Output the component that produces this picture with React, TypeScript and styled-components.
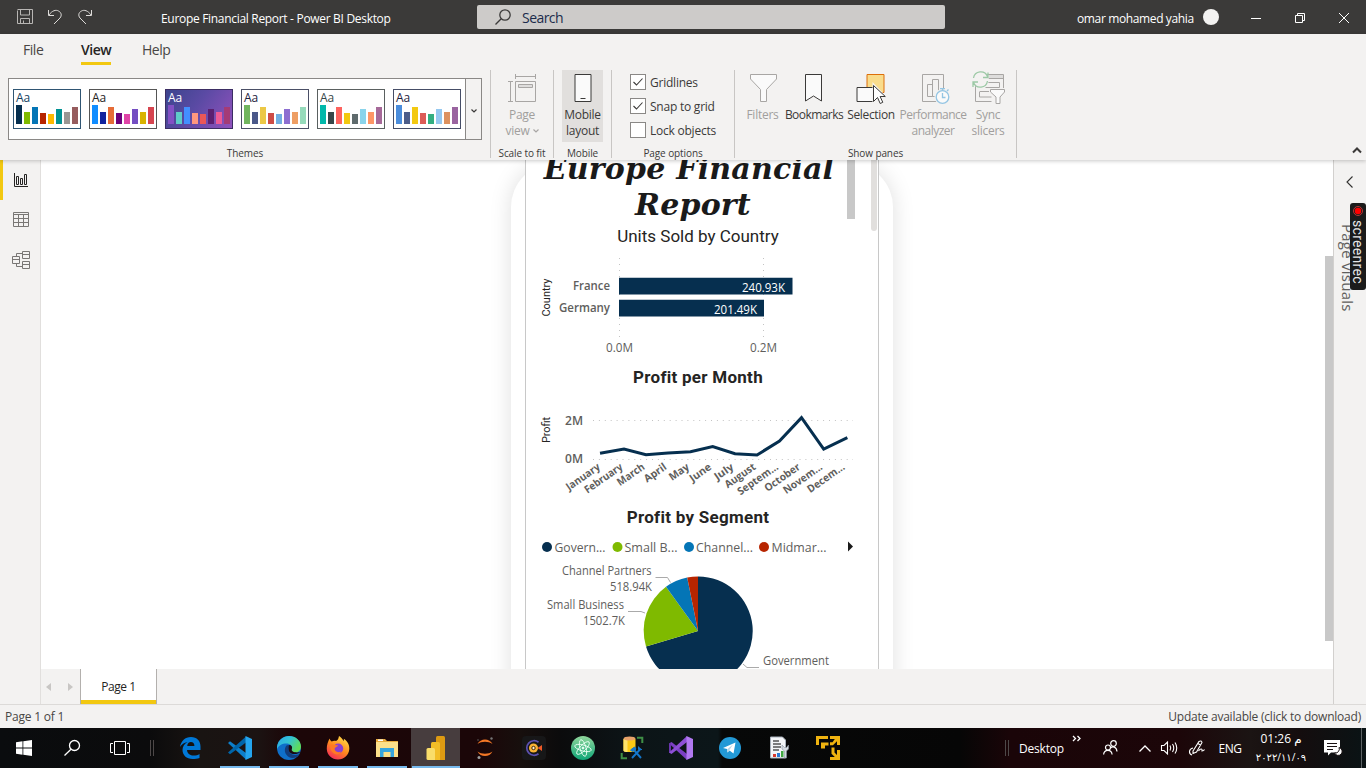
import React from "react";
import styled, { createGlobalStyle } from "styled-components";

const ui = `"Open Sans", "Noto Sans", "DejaVu Sans", sans-serif`;

const Global = createGlobalStyle`
  * { box-sizing: border-box; }
  body { margin: 0; overflow: hidden; font-family: ${ui}; font-size: 12px; color: #252423; }
  svg { display: block; flex: none; overflow: visible; }
`;

const Window = styled.div`
  display: flex;
  flex-direction: column;
  width: 1366px;
  height: 768px;
  background: #fff;
  overflow: hidden;
`;

/* Title bar */
const TitleBar = styled.header`
  display: grid;
  grid-template-columns: 477px 468px 1fr;
  align-items: center;
  height: 34px;
  flex: none;
  background: #3b3a39;
  color: #fff;
`;
const QuickAccess = styled.div`
  display: flex;
  align-items: center;
  padding-left: 17px;
  gap: 14px;
`;
const DocTitle = styled.span<{ $gap?: number }>`
  font-size: 12px;
  letter-spacing: ${(p) => (p.$gap ? -0.31 : -0.37)}px;
  white-space: nowrap;
  margin-left: ${(p) => p.$gap ?? 0}px;
  padding-top: 2px;
`;
const SearchBox = styled.div`
  display: flex;
  align-items: center;
  gap: 11px;
  height: 24px;
  padding-left: 18px;
  border-radius: 2px;
  background: #cdcbc9;
  color: #1b2b4b;
  font-size: 14px;
  letter-spacing: -0.55px;
`;
const Account = styled.div`
  display: flex;
  align-items: center;
  padding-left: 132px;
`;
const Avatar = styled.div`
  width: 16px;
  height: 16px;
  margin: 0 32px 0 9px;
  border-radius: 50%;
  background: #f3f2f1;
`;
const WindowButtons = styled.div`
  display: flex;
  align-items: center;
  gap: 34px;
  padding-top: 1px;
`;

/* Ribbon */
const Ribbon = styled.section`
  position: relative;
  z-index: 2;
  height: 126px;
  flex: none;
  background: #f3f2f1;
  box-shadow: 0 1px 4px rgba(0, 0, 0, 0.22);
`;
const Tabs = styled.nav`
  display: flex;
  height: 36px;
  padding-left: 23px;
`;
const Tab = styled.span<{ $w: number; $gap: number; $active?: boolean }>`
  width: ${(p) => p.$w}px;
  margin-right: ${(p) => p.$gap}px;
  height: 31px;
  font-size: 14px;
  line-height: 32px;
  letter-spacing: -0.45px;
  white-space: nowrap;
  color: ${(p) => (p.$active ? "#252423" : "#484644")};
  font-weight: ${(p) => (p.$active ? 600 : 400)};
  border-bottom: 3px solid ${(p) => (p.$active ? "#f2c811" : "transparent")};
`;
const Groups = styled.div`
  display: flex;
  height: 88px;
  position: relative;
`;
const Group = styled.div<{ $w: number }>`
  display: flex;
  flex-direction: column;
  width: ${(p) => p.$w}px;
  height: 88px;
  border-right: 1px solid #c8c6c4;
`;
const GroupBody = styled.div<{ $left?: number }>`
  display: flex;
  flex: none;
  height: 76px;
  padding-left: ${(p) => p.$left ?? 0}px;
`;
const GroupLabel = styled.div`
  text-align: center;
  font-size: 10px;
  line-height: 14px;
  letter-spacing: -0.1px;
  color: #3b3a39;
`;
const Gallery = styled.div`
  display: flex;
  align-items: center;
  width: 474px;
  height: 62px;
  margin-top: 8px;
  border: 1px solid #8a8886;
  background: #fff;
`;
const GalleryItems = styled.div`
  display: flex;
  gap: 8px;
  width: 456px;
  padding-left: 4px;
`;
const GalleryMore = styled.div`
  display: flex;
  align-items: center;
  justify-content: center;
  width: 16px;
  height: 60px;
  flex: none;
  background: #f3f2f1;
  border-left: 1px solid #8a8886;
  padding-top: 4px;
`;
const ThemeCard = styled.div<{ $edge: string; $ink: string; $fill: string }>`
  display: flex;
  flex-direction: column;
  justify-content: space-between;
  width: 68px;
  height: 40px;
  padding: 0 2px 4px;
  border: 1px solid ${(p) => p.$edge};
  background: ${(p) => p.$fill};
  color: ${(p) => p.$ink};
  font-size: 12px;
  line-height: 15px;
  letter-spacing: -0.1px;
`;
const ThemeBars = styled.div`
  display: flex;
  align-items: flex-end;
  gap: 2px;
  height: 19px;
  margin-top: -1px;
`;
const ThemeBar = styled.i<{ $h: number; $c: string }>`
  width: 6px;
  height: ${(p) => p.$h}px;
  background: ${(p) => p.$c};
`;
const RibbonButton = styled.div<{ $w: number; $on?: boolean; $off?: boolean; $ls?: number }>`
  display: flex;
  flex-direction: column;
  align-items: center;
  width: ${(p) => p.$w}px;
  height: 72px;
  padding-top: 2px;
  text-align: center;
  white-space: pre;
  line-height: 16px;
  font-size: 12px;
  letter-spacing: ${(p) => p.$ls ?? -0.25}px;
  background: ${(p) => (p.$on ? "#e1dfdd" : "transparent")};
  color: ${(p) => (p.$off ? "#a19f9d" : "#3b3a39")};
`;
const ButtonText = styled.span`
  margin-top: 3px;
`;
const Caret = styled.svg`
  display: inline-block;
  margin-left: 3px;
  vertical-align: 2px;
`;
const Options = styled.div`
  display: flex;
  flex-direction: column;
  gap: 8px;
  padding-top: 4px;
`;
const Option = styled.label`
  display: flex;
  align-items: center;
  gap: 4px;
  height: 16px;
  font-size: 12px;
  letter-spacing: -0.23px;
  color: #3b3a39;
`;
const CheckBox = styled.span`
  display: flex;
  align-items: center;
  justify-content: center;
  width: 16px;
  height: 16px;
  border: 1px solid #8a8886;
  background: #fff;
`;
const Collapse = styled.div`
  margin: 77px 4px 0 auto;
`;

/* Work area */
const Work = styled.main`
  display: flex;
  height: 544px;
  flex: none;
`;
const Rail = styled.aside`
  width: 41px;
  background: #f3f2f1;
  border-right: 1px solid #e1dfdd;
`;
const RailItem = styled.div<{ $active?: boolean }>`
  display: flex;
  align-items: center;
  height: 40px;
  padding-left: ${(p) => (p.$active ? 8 : 11)}px;
  border-left: ${(p) => (p.$active ? "3px solid #f2c811" : "0")};
`;
const Center = styled.div`
  display: flex;
  flex-direction: column;
  width: 1292px;
`;
const Canvas = styled.div`
  position: relative;
  display: flex;
  height: 509px;
  padding-left: 470px;
  overflow: hidden;
  background: #fff;
`;
const Phone = styled.div`
  width: 382px;
  height: 700px;
  margin-top: 3px;
  padding: 0 14px;
  border-radius: 44px;
  background: #fff;
  box-shadow: 0 0 22px rgba(0, 0, 0, 0.13);
`;
const Screen = styled.div`
  position: relative;
  display: flow-root;
  width: 354px;
  height: 600px;
  margin-top: -3px;
  padding: 0 23px 0 15px;
  background: #fff;
  border: 1px solid #c8c8c8;
  border-top: 0;
`;
const Scroll = styled.div<{ $x: number; $y: number; $w: number; $h: number; $c: string; $r?: number }>`
  position: absolute;
  left: ${(p) => p.$x}px;
  top: ${(p) => p.$y}px;
  width: ${(p) => p.$w}px;
  height: ${(p) => p.$h}px;
  border-radius: ${(p) => p.$r ?? 0}px;
  background: ${(p) => p.$c};
`;
const ReportTitle = styled.h1`
  width: 330px;
  height: 73px;
  margin: -9px 0 0 -17px;
  text-align: center;
  font: italic bold 30px/36px "DejaVu Serif", "Liberation Serif", serif;
  letter-spacing: 0.2px;
  white-space: nowrap;
  color: #1a1a1a;
`;
const TitleLine = styled.span<{ $indent?: number }>`
  display: block;
  padding-left: ${(p) => p.$indent ?? 0}px;
`;
const VisualTitle = styled.h2<{ $bold?: boolean }>`
  height: 24px;
  margin: 0;
  text-align: center;
  font: ${(p) => (p.$bold ? 700 : 400)} 17px/24px Roboto, sans-serif;
  letter-spacing: ${(p) => (p.$bold ? 0.27 : 0)}px;
  color: #252423;
`;
const Chart = styled.svg`
  font-family: ${ui};
  font-size: 12px;
  fill: #605e5c;
`;

const Sheets = styled.div`
  display: flex;
  height: 35px;
  background: #f3f2f1;
`;
const SheetArrows = styled.div`
  display: flex;
  align-items: center;
  gap: 17px;
  width: 39px;
  padding-left: 5px;
`;
const Sheet = styled.div`
  width: 77px;
  height: 35px;
  text-align: center;
  font-size: 12px;
  line-height: 36px;
  font-weight: 500;
  letter-spacing: -0.45px;
  background: #fff;
  border: solid #b3b0ad;
  border-width: 0 1px;
  box-shadow: inset 0 -4px #f2c811;
`;
const VisualsPane = styled.aside`
  position: relative;
  width: 33px;
  background: #f3f2f1;
  border-left: 1px solid #d2d0ce;
  padding: 16px 0 0 12px;
`;
const PaneTitle = styled.div`
  margin-top: 36px;
  margin-left: -7px;
  writing-mode: vertical-rl;
  font-size: 15px;
  line-height: 18px;
  letter-spacing: 0.25px;
  white-space: nowrap;
  color: #605e5c;
`;
const RecorderBadge = styled.div`
  position: absolute;
  left: 16px;
  top: 43px;
  display: flex;
  flex-direction: column;
  align-items: center;
  gap: 4px;
  width: 16px;
  height: 87px;
  padding-top: 3px;
  border-radius: 3px;
  background: #1b1b1b;
  color: #e6e6e6;
`;
const RecorderName = styled.span`
  writing-mode: vertical-rl;
  font: 400 14px/16px Roboto, sans-serif;
  letter-spacing: 0.3px;
`;
const StatusBar = styled.footer`
  display: flex;
  justify-content: space-between;
  align-items: center;
  height: 24px;
  flex: none;
  padding: 0 5px;
  border-top: 1px solid #dcdad8;
  background: #f3f2f1;
  color: #484644;
  font-size: 12px;
  letter-spacing: -0.22px;
`;

/* Taskbar */
const Taskbar = styled.div`
  display: flex;
  align-items: center;
  height: 40px;
  flex: none;
  color: #fff;
  background: linear-gradient(90deg, #0a0c0e 0, #0b0b0c 150px, #191412 200px, #1b1312 258px, #1c0608 290px, #1b0608 480px, #170f0d 520px, #0b0b0c 560px, #0c1417 630px, #0c1619 718px, #070808 722px, #060606 960px, #1a0508 1010px, #1c0609 1180px, #1b1413 1250px, #140d0e 1300px, #0a1315 1366px);
`;
const SystemButton = styled.div<{ $ml: number }>`
  display: flex;
  margin-left: ${(p) => p.$ml}px;
`;
const Apps = styled.div`
  display: flex;
  margin-left: 12px;
`;
const TaskApp = styled.div<{ $open?: boolean; $active?: boolean }>`
  display: flex;
  align-items: center;
  justify-content: center;
  width: 49px;
  height: 40px;
  background: ${(p) =>
    p.$open
      ? "linear-gradient(#76b9ed, #76b9ed) 50% 100% / " + (p.$active ? "48px" : "40px") + " 2px no-repeat" + (p.$active ? ", #473d3e" : "")
      : "none"};
`;
const Tray = styled.div`
  display: flex;
  align-items: center;
  margin-left: 151px;
`;
const TrayCell = styled.div<{ $w: number; $ls?: number; $up?: number }>`
  display: flex;
  align-items: center;
  justify-content: center;
  width: ${(p) => p.$w}px;
  padding-bottom: ${(p) => p.$up ?? 0}px;
  font-size: 12px;
  letter-spacing: ${(p) => p.$ls ?? 0}px;
  white-space: nowrap;
  flex: none;
`;
const Clock = styled.div`
  display: flex;
  flex-direction: column;
  align-items: center;
  width: 58px;
  padding-bottom: 1px;
  white-space: nowrap;
  font-size: 12px;
  line-height: 18px;
  letter-spacing: -0.55px;
`;
const ClockDate = styled.span`
  font-size: 10px;
  letter-spacing: -0.1px;
`;

const themes = [
  { edge: "#2f5573", ink: "#123f5f", fill: "#fff", bars: ["#062f4f", "#7fba00", "#0475b6", "#b72500", "#fdb900", "#009294", "#999694", "#965c5e"] },
  { edge: "#555", ink: "#252423", fill: "#fff", bars: ["#118dff", "#12239e", "#e66c37", "#6b007b", "#e044a7", "#744ec2", "#d9b300", "#d64550"] },
  { edge: "#3b2d63", ink: "#fff", fill: "linear-gradient(125deg, #3f4590 5%, #5b4aa4 45%, #9152bd)", bars: ["#8250c4", "#5ecbc8", "#438fff", "#ff977e", "#eb5757", "#5b2071", "#ec5a96", "#a43b76"] },
  { edge: "#4a4f66", ink: "#1c2340", fill: "#fff", bars: ["#70b55e", "#4a588a", "#ecc846", "#cd4c46", "#71afe2", "#8d6fd1", "#ee9e64", "#95dabb"] },
  { edge: "#5a6060", ink: "#374649", fill: "#fff", bars: ["#01b8aa", "#374649", "#fd625e", "#f2c80f", "#5f6b6d", "#8ad4eb", "#fe9666", "#a66999"] },
  { edge: "#454d66", ink: "#1c2340", fill: "#fff", bars: ["#4a8ddc", "#4c5d8a", "#f3c911", "#dc5b57", "#33ae81", "#95c8f0", "#dd915f", "#9a64a0"] },
];
const barHeights = [19, 12, 17, 11, 10, 15, 12, 17];

const G = "#a8a6a4";
const D = "#3b3a39";

const PageViewIcon = () => (
  <svg width="32" height="32" fill="none" stroke={G}>
    <path d="M9.500 2v5M29.500 2v5M9.500 4.500h20M2 9.500h5M2 29.500h5M4.500 9.500v20" />
    <path d="M9.500 9.500h20v20h-20z" />
    <path d="M12.500 12.500h14v3h-14z" fill="#dedddc" />
  </svg>
);
const MobileIcon = () => (
  <svg width="32" height="32" fill="#fafafa" stroke={D}>
    <path d="M8 2.500h16v27h-16zM13.500 26.500h5" />
  </svg>
);
const FilterIcon = () => (
  <svg width="32" height="32" fill="#fafafa" stroke={G}>
    <path d="M3.500 2.500h26v4.500l-10 10.500v12h-6v-12l-10-10.500z" />
  </svg>
);
const BookmarkIcon = () => (
  <svg width="32" height="32" fill="#fafafa" stroke={D}>
    <path d="M7.500 2.500h16v26.500l-8-5-8 5z" />
  </svg>
);
const SelectionIcon = () => (
  <svg width="32" height="32">
    <path d="M12 2.500h17v18h-17z" fill="#f9dc8b" stroke="#dd6f0a" />
    <path d="M2 15.500h17v14h-17z" fill="#fafafa" stroke={D} />
    <path d="M18.500 12.500v17.500l4-4 3 6.500 3-1.500-3-6h5z" fill="#fff" stroke="#f3f2f1" strokeWidth="2" />
    <path d="M18.500 13.500v16l4-4 2.700 6 2.600-1.200-2.700-5.800h5.200z" fill="#fff" stroke={D} />
  </svg>
);
const PerformanceIcon = () => (
  <svg width="32" height="32" fill="none" stroke={G}>
    <path d="M5.500 2.500h21v27h-21zM10.500 24.500v-12h5v12zM15.500 24.500v-17h6v17z" />
    <circle cx="25.500" cy="25" r="8" fill="#f3f2f1" stroke="none" />
    <g stroke="#94c5e3" strokeWidth="1.300">
      <circle cx="25.500" cy="25" r="6.300" fill="#fafafa" />
      <path d="M25.500 21v4.500h3M23 16.700h5M30 19l1.500-1.500M25.500 17v2" />
    </g>
  </svg>
);
const SyncIcon = () => (
  <svg width="32" height="32" fill="none" stroke={G}>
    <path d="M12 2.500h19.500v18M12 6.500h19.500M3.500 12v17.500h16M7.500 20v5h12M7.500 19.500h12M15 10.500h12.500v5h-14" />
    <path d="M17 3h14v3h-14z" fill="#dedddc" stroke="none" />
    <circle cx="8.500" cy="7.500" r="8.500" fill="#f3f2f1" stroke="none" />
    <path d="M1.500 6a7.300 7.300 0 0 1 14-1.500M16 .500v5h-5M15.500 9a7.300 7.300 0 0 1-14 1.500M1 15v-5h5" stroke="#9cc9a6" strokeWidth="1.300" />
    <path d="M18.500 17.500h15v3l-5 5v6h-4.500v-6l-5.500-5z" fill="#fafafa" stroke="#f3f2f1" strokeWidth="3" />
    <path d="M18.500 17.500h14v2.500l-4.500 5v6.500h-4v-6.500l-5.500-5z" fill="#fafafa" />
  </svg>
);

const Chevron = ({ d, w = 8, h = 5, c = D, s = 1.2 }: { d: string; w?: number; h?: number; c?: string; s?: number }) => (
  <svg width={w} height={h} fill="none" stroke={c} strokeWidth={s}>
    <path d={d} />
  </svg>
);

const monthly: [string, number, number, number][] = [
  ["January", 601.5, 453, 39],
  ["February", 624, 449, 44],
  ["March", 646, 454.7, 31],
  ["April", 668, 453, 25],
  ["May", 690.5, 451.7, 22],
  ["June", 712.7, 446.5, 24],
  ["July", 735, 453.8, 21],
  ["August", 757, 455, 35],
  ["Septem...", 779.5, 441, 47],
  ["October", 801.5, 417.7, 41],
  ["Novem...", 823.7, 449, 45],
  ["Decem...", 846, 438.3, 43],
];

const Fit = ({ x, y, w, children, ...rest }: React.SVGProps<SVGTextElement> & { w: number }) => (
  <text x={x} y={y} textLength={w} lengthAdjust="spacingAndGlyphs" {...rest}>
    {children}
  </text>
);

const UnitsChart = () => (
  <Chart width="314" height="117" viewBox="541 248 314 117">
    <path d="M619.500 258v80M763.500 258v80" stroke="#c3c3c3" strokeDasharray="1 5" />
    <path d="M619 277.700h173.500v16.700h-173.500zM619 299.700h145v16.700h-145z" fill="#062f4f" />
    <g fill="#fff" fontSize="12">
      <Fit x={742} y={291.5} w={43}>240.93K</Fit>
      <Fit x={714} y={313.5} w={43}>201.49K</Fit>
    </g>
    <g fontWeight="600" fontSize="12.500">
      <Fit x={573} y={290} w={37}>France</Fit>
      <Fit x={559} y={312} w={51}>Germany</Fit>
    </g>
    <Fit x={606} y={352} w={27}>0.0M</Fit>
    <Fit x={750} y={352} w={27}>0.2M</Fit>
    <text transform="translate(550 316.500) rotate(-90)" fontSize="11" fontFamily="Roboto" fill="#252423" textLength="38">Country</text>
  </Chart>
);

const ProfitChart = () => (
  <Chart width="314" height="116" viewBox="541 389 314 116">
    <path d="M593 420.500h260M593 459.500h260" stroke="#c3c3c3" strokeDasharray="1 4.900" />
    <g fontWeight="600" fontSize="12.500">
      <Fit x={565} y={425} w={18}>2M</Fit>
      <Fit x={565} y={463} w={18}>0M</Fit>
    </g>
    <polyline points={monthly.map((m) => `${m[1]},${m[2]}`).join(" ")} fill="none" stroke="#062f4f" strokeWidth="3" strokeLinecap="square" />
    <g fontWeight="700" fontSize="10.500">
      {monthly.map(([name, x, , w]) => (
        <text key={name} transform={`translate(${x - 0.5} ${468.5}) rotate(-35)`} textAnchor="end" textLength={w} lengthAdjust="spacingAndGlyphs">
          {name}
        </text>
      ))}
    </g>
    <text transform="translate(550 443) rotate(-90)" fontSize="11" fontFamily="Roboto" fill="#252423" textLength="26">Profit</text>
  </Chart>
);

const legend: [string, string, number, number, number][] = [
  ["Govern...", "#062f4f", 547, 554.5, 51],
  ["Small B...", "#7fba00", 617.5, 624.5, 53],
  ["Channel...", "#0475b6", 689, 696, 57],
  ["Midmar...", "#b72500", 764, 771.5, 55],
];

const SegmentChart = () => (
  <Chart width="314" height="170" viewBox="541 529 314 170">
    {legend.map(([name, c, cx, x, w]) => (
      <g key={name}>
        <circle cx={cx} cy="547" r="5" fill={c} />
        <Fit x={x} y={552} w={w} fontSize="13">{name}</Fit>
      </g>
    ))}
    <path d="M848 541.500v10l5-5z" fill="#1a1a1a" />
    <path d="M698 631V576.500a54.500 54.500 0 1 1-52 70.100z" fill="#062f4f" />
    <path d="M698 631L646 646.600A54.500 54.500 0 0 1 666 586.800z" fill="#7fba00" />
    <path d="M698 631L666 586.800A54.500 54.500 0 0 1 687.200 577.600z" fill="#0475b6" />
    <path d="M698 631L687.200 577.600A54.500 54.500 0 0 1 698 576.500z" fill="#b72500" />
    <path d="M655.500 577.500h12l3 5M628 611.500h13l4 1.500M743 664l4 3.500h12" fill="none" stroke="#aaa" />
    <Fit x={562} y={575} w={89.5}>Channel Partners</Fit>
    <Fit x={610} y={591} w={42}>518.94K</Fit>
    <Fit x={547} y={609} w={77}>Small Business</Fit>
    <Fit x={583} y={625} w={42}>1502.7K</Fit>
    <Fit x={763} y={665} w={66}>Government</Fit>
  </Chart>
);

const EdgeLegacy = () => (
  <svg width="21" height="22" viewBox="0 0 21 22">
    <path d="M0 10C1 4 5 0 11 0c6 0 9.500 4 9.500 9.500V13H7c.3 4 3.500 5.500 6.500 5.500 2.500 0 4.500-.7 6-1.600v4C17.500 21.500 15 22 12.500 22 6.500 22 2.500 18 2.500 13c0-3.500 2-6.500 5-8C4 5.500 1.500 7.500 0 10zM7.200 9h7.200c0-2.600-1.300-4-3.500-4-2.100 0-3.400 1.600-3.700 4z" fill="#0078d7" />
  </svg>
);
const Code = () => (
  <svg width="24" height="24">
    <path d="M0 7l2-1.700L18 17v6.500z" fill="#0d7fcb" />
    <path d="M0 16.500l2 1.700L18 6.500V.500z" fill="#0065a9" />
    <path d="M17.500 0L24 3v18l-6.500 3z" fill="#24a5ee" />
  </svg>
);
const Edge = () => (
  <svg width="24" height="24">
    <defs>
      <linearGradient id="eg" x1="0" x2="1" y1="0" y2=".5"><stop offset="0" stopColor="#2aa7e6" /><stop offset=".5" stopColor="#33c2d6" /><stop offset="1" stopColor="#5fdc5a" /></linearGradient>
    </defs>
    <circle cx="12" cy="12" r="12" fill="#0f6fc9" />
    <path d="M0 11C1 4 6 0 12 0c7 0 12 5 12 10.500 0 4-3 6-6 6-3.500 0-4.500-1.500-3.500-3C16 10 13 7.500 9.500 7.500 5 7.500 1.500 9.500 0 13z" fill="url(#eg)" />
    <path d="M9 10c-3 5 0 11 6 12 3 .3 6-1.500 7.500-4-6 2.500-11-.5-11-5 0-1.500.5-2.500 1.500-3.500C11.500 8.800 10 9 9 10z" fill="#123d7c" />
    <path d="M14.800 13c1-2-.5-4-2.500-4-1.500 3-1 7 2 8.500 3 1.200 7 .5 9-1.500-4 1-9.500.2-8.500-3z" fill="#1a0a12" />
  </svg>
);
const Firefox = () => (
  <svg width="24" height="24">
    <defs>
      <linearGradient id="ff" x1=".8" x2=".2" y1="0" y2="1"><stop offset="0" stopColor="#ffe14a" /><stop offset=".5" stopColor="#ff8a1e" /><stop offset="1" stopColor="#f5245d" /></linearGradient>
    </defs>
    <path d="M3.500 2.500c.5 1.500 1.200 2.300 2.300 3C7 4.500 9 4.500 10 5c1-.5 2.500-1.500 3-5 2 1 3.500 3 4.500 5 .5-.7.5-1.500.3-2.300C22 5.500 23.500 9 23.300 13c-.4 6-5.300 10.500-11.300 10.500S1 19 .8 13C.6 9 2 6 3.500 2.500z" fill="url(#ff)" />
    <circle cx="12.200" cy="12.500" r="5" fill="#8a3fd0" />
    <path d="M4 9c3-1.500 5 .3 8 .3 0 1.500-2.500 1.700-3.300 3-.5 3 3 5 6.300 3.200-2 5.500-11 3-11-6.500z" fill="#ff7a24" />
  </svg>
);
const Explorer = () => (
  <svg width="24" height="24">
    <path d="M1 3h9l2 2h11v4H1z" fill="#e8a93a" />
    <path d="M1 6h22v15H1z" fill="#fde08a" />
    <path d="M3 3.500h5v1.500H3z" fill="#fff" />
    <path d="M5 21v-9h14v9h-3.500v-5h-7v5z" fill="#37a5de" />
  </svg>
);
const PowerBi = () => (
  <svg width="24" height="24">
    <path d="M12 1.500Q12 0 13.500 0h6Q21 0 21 1.500V24h-9z" fill="#dd9a12" />
    <path d="M7 7.500Q7 6 8.500 6h6Q16 6 16 7.500V24H7z" fill="#f2bd27" />
    <path d="M2.500 13.500Q2.500 12 4 12h5.500Q11 12 11 13.500V24H4Q2.500 24 2.500 22.500z" fill="#f9dd6a" />
  </svg>
);
const Jupyter = () => (
  <svg width="24" height="24">
    <path d="M4.500 8c3-6 12-6 15 0-4-3-11-3-15 0zM4.500 15.500c3 6 12 6 15 0-4 3-11 3-15 0z" fill="#f37726" />
    <circle cx="18.500" cy="2.500" r="1.200" fill="#767677" /><circle cx="6" cy="21.500" r="1.500" fill="#9e9e9e" /><circle cx="5" cy="4" r=".8" fill="#616262" />
  </svg>
);
const Recorder = () => (
  <svg width="24" height="24">
    <rect width="24" height="24" rx="4" fill="#171718" />
    <path d="M16.500 6.200a7.300 7.300 0 1 0 0 11.600" fill="none" stroke="#5c50b0" strokeWidth="1.700" />
    <path d="M15.500 12l4.500-3v6z" fill="#ef5a28" />
    <circle cx="11.500" cy="12" r="4.500" fill="#f9b233" /><circle cx="11.500" cy="12" r="1.700" fill="#fff2c8" stroke="#3b2510" />
  </svg>
);
const Atom = () => (
  <svg width="24" height="24" fill="none" stroke="#e9fff3" strokeWidth=".9">
    <defs><linearGradient id="at" x1="0" x2="0" y1="0" y2="1"><stop offset="0" stopColor="#8fd69b" /><stop offset="1" stopColor="#0fa577" /></linearGradient></defs>
    <circle cx="12" cy="12" r="12" fill="url(#at)" stroke="none" />
    <ellipse cx="12" cy="12" rx="8.500" ry="3" transform="rotate(15 12 12)" /><ellipse cx="12" cy="12" rx="8.500" ry="3" transform="rotate(75 12 12)" /><ellipse cx="12" cy="12" rx="8.500" ry="3" transform="rotate(135 12 12)" />
    <circle cx="12" cy="12" r="1" fill="#fff" />
  </svg>
);
const Database = () => (
  <svg width="24" height="24">
    <path d="M3.500 3v11.500c0 2 12 2 12 0V3z" fill="#fbc916" /><path d="M3.500 3v11.500c0 1 2 1.500 4 1.600V3z" fill="#fde36b" />
    <ellipse cx="9.500" cy="2.500" rx="6" ry="2" fill="#e8a26a" />
    <path d="M17 1.700h5.300V7M1.700 17v5.300H7" fill="none" stroke="#3f8f46" strokeWidth="2" />
    <path d="M13 13l8 9M20 13.500l-8 8.500" stroke="#1477cc" strokeWidth="1.900" fill="none" />
    <path d="M10.500 14l4-3 1.500 2-4 2.500zM18.500 10.500v3h3.500" stroke="#1477cc" fill="#1477cc" />
  </svg>
);
const VisualStudio = () => (
  <svg width="24" height="24">
    <path d="M0 7.500L2.500 6 18 18v6z" fill="#7b3fc4" />
    <path d="M0 7.500L2 7v10L0 16.500z" fill="#6a35ad" />
    <path d="M0 16.500L2.500 18 18 6V0z" fill="#8d4fd6" />
    <path d="M17.500 0L24 3v18l-6.500 3z" fill="#b179f1" />
  </svg>
);
const Telegram = () => (
  <svg width="24" height="24">
    <circle cx="12" cy="12" r="11" fill="#2399d6" />
    <path d="M5 12l12.500-5.500-2 11-4-3-2 2-.5-3.500z" fill="#fff" /><path d="M9 13.500l6-5-4 6-1.500 2z" fill="#b5d7ea" />
  </svg>
);
const Report = () => (
  <svg width="24" height="24">
    <path d="M3.500 1h12l3 3v18h-15z" fill="#f3f5f8" stroke="#a9b1bb" />
    <path d="M6 5h6M6 8h8M6 11h8M6 14h6" stroke="#555" strokeWidth="1.300" />
    <path d="M6 18h3v3H6z" fill="#d8382c" /><path d="M10 17h3v4h-3z" fill="#2a7ad4" /><path d="M14 15h2.500v6H14z" fill="#41a843" />
    <path d="M15 9v4l2.500 2v7h2v-7l2-2V9l-2 2.500h-2z" fill="#d5dbe2" stroke="#8c96a1" strokeWidth=".6" />
  </svg>
);
const Vmware = () => (
  <svg width="24" height="24" fill="#efb310">
    <path d="M0 0h12v3H3v6H0zM5 6.500h7.500v3H9v3H5zM14 0h10v9h-3V5.200l-4 4h-3v-3h2.500L18.800 3H14zM24 24H14v-3h4.800l-3.300-3.300v-6.200h3v5l2.500 2.500V14h3z" />
  </svg>
);

const Grip = () => (
  <svg width="4" height="16" stroke="#4d4848"><path d="M.500 0v16M3.500 0v16" /></svg>
);

export default function App() {
  return (
    <Window>
      <Global />
      <TitleBar>
        <QuickAccess>
          <svg width="16" height="16" fill="none" stroke="#b8b6b4">
            <path d="M.500 1.500v13h2.500M.500.500h15v14h-12.500M3.500.500v5.500h9V.500M3.500 14.500v-5h9v5M6.500 14v-2.500" />
          </svg>
          <svg width="16" height="16" fill="none" stroke="#dddbd9">
            <path d="M1.500 1v5.500h5.500M2 6C5 1.500 9 .500 11.500 2c3 1.500 3.500 4.500 1.500 7L7 15" />
          </svg>
          <svg width="16" height="16" fill="none" stroke="#dddbd9">
            <path d="M14.500 1v5.500h-5.500M14 6C11 1.500 7 .500 4.500 2c-3 1.500-3.500 4.500-1.500 7l6 6" />
          </svg>
          <DocTitle $gap={54}>Europe Financial Report - Power BI Desktop</DocTitle>
        </QuickAccess>
        <SearchBox>
          <svg width="16" height="16" fill="none" stroke="#3b3a39" strokeWidth="1.300">
            <circle cx="10" cy="6" r="5.200" /><path d="M6.200 9.800L.500 15.500" />
          </svg>
          Search
        </SearchBox>
        <Account>
          <DocTitle>omar mohamed yahia</DocTitle>
          <Avatar />
          <WindowButtons>
            <svg width="10" height="10" stroke="#fff"><path d="M0 5.500h10" /></svg>
            <svg width="10" height="10" fill="none" stroke="#fff"><path d="M.500 2.500h7v7h-7zM2.500 2.500v-2h7v7h-2" /></svg>
            <svg width="10" height="10" stroke="#fff"><path d="M0 0l10 10M10 0L0 10" /></svg>
          </WindowButtons>
        </Account>
      </TitleBar>

      <Ribbon>
        <Tabs>
          <Tab $w={20} $gap={38}>File</Tab>
          <Tab $w={30} $gap={31} $active>View</Tab>
          <Tab $w={28} $gap={0}>Help</Tab>
        </Tabs>
        <Groups>
          <Group $w={491}>
            <GroupBody $left={8}>
              <Gallery>
                <GalleryItems>
                  {themes.map((t) => (
                    <ThemeCard key={t.bars[0]} $edge={t.edge} $ink={t.ink} $fill={t.fill}>
                      Aa
                      <ThemeBars>
                        {t.bars.map((c, i) => (
                          <ThemeBar key={c} $c={c} $h={barHeights[i]} />
                        ))}
                      </ThemeBars>
                    </ThemeCard>
                  ))}
                </GalleryItems>
                <GalleryMore><Chevron w={6} h={4} d="M.500.500L3 3L5.500.500" /></GalleryMore>
              </Gallery>
            </GroupBody>
            <GroupLabel>Themes</GroupLabel>
          </Group>
          <Group $w={63}>
            <GroupBody $left={10}>
              <RibbonButton $w={42} $off>
                <PageViewIcon />
                <ButtonText>
                  {"Page\nview"}
                  <Caret width="6" height="4" fill="none" stroke={G} strokeWidth="1.200"><path d="M.500.500L3 3L5.500.500" /></Caret>
                </ButtonText>
              </RibbonButton>
            </GroupBody>
            <GroupLabel>Scale to fit</GroupLabel>
          </Group>
          <Group $w={58}>
            <GroupBody $left={8}>
              <RibbonButton $w={41} $on><MobileIcon /><ButtonText>{"Mobile\nlayout"}</ButtonText></RibbonButton>
            </GroupBody>
            <GroupLabel>Mobile</GroupLabel>
          </Group>
          <Group $w={123}>
            <GroupBody $left={18}>
              <Options>
                {["Gridlines", "Snap to grid", "Lock objects"].map((label, i) => (
                  <Option key={label}>
                    <CheckBox>
                      {i < 2 && <Chevron w={10} h={8} s={1.1} d="M.500 4L3.500 7L9.500.500" />}
                    </CheckBox>
                    {label}
                  </Option>
                ))}
              </Options>
            </GroupBody>
            <GroupLabel>Page options</GroupLabel>
          </Group>
          <Group $w={282}>
            <GroupBody $left={6}>
              <RibbonButton $w={43} $off><FilterIcon /><ButtonText>Filters</ButtonText></RibbonButton>
              <RibbonButton $w={60} $ls={-0.55}><BookmarkIcon /><ButtonText>Bookmarks</ButtonText></RibbonButton>
              <RibbonButton $w={54} $ls={-0.35}><SelectionIcon /><ButtonText>Selection</ButtonText></RibbonButton>
              <RibbonButton $w={70} $off $ls={-0.5}><PerformanceIcon /><ButtonText>{"Performance\nanalyzer"}</ButtonText></RibbonButton>
              <RibbonButton $w={40} $off><SyncIcon /><ButtonText>{"Sync\nslicers"}</ButtonText></RibbonButton>
            </GroupBody>
            <GroupLabel>Show panes</GroupLabel>
          </Group>
          <Collapse><Chevron w={10} h={6} s={2} d="M1 5.500L5 1.500L9 5.500" /></Collapse>
        </Groups>
      </Ribbon>

      <Work>
        <Rail>
          <RailItem $active>
            <svg width="20" height="16" fill="none" stroke="#252423">
              <path d="M3.500 1v13.500h13.500" /><path d="M5.500 4.500h2v8h-2zM9.500 6.500h2v6h-2zM13.500 2.500h2v10h-2z" />
            </svg>
          </RailItem>
          <RailItem>
            <svg width="20" height="16" fill="none" stroke="#797775">
              <path d="M2.500.500h15v14h-15zM2.500 2.500h15M2.500 6.500h15M2.500 10.500h15M7.500 2.500v12M12.500 2.500v12" />
            </svg>
          </RailItem>
          <RailItem>
            <svg width="20" height="18" fill="none" stroke="#797775">
              <path d="M1.500 5.500h7v7h-7zM1.500 8.500h7M11.500.500h7v7h-7zM11.500 3.500h7M11.500 10.500h7v7h-7zM11.500 13.500h7M5.500 5.500v-3h6M5.500 12.500v3h6" />
            </svg>
          </RailItem>
        </Rail>
        <Center>
          <Canvas>
            <Phone>
              <Screen>
                <ReportTitle>
                  <TitleLine>Europe Financial</TitleLine>
                  <TitleLine $indent={8}>Report</TitleLine>
                </ReportTitle>
                <VisualTitle>Units Sold by Country</VisualTitle>
                <UnitsChart />
                <VisualTitle $bold>Profit per Month</VisualTitle>
                <ProfitChart />
                <VisualTitle $bold>Profit by Segment</VisualTitle>
                <SegmentChart />
                <Scroll $x={321} $y={0} $w={8} $h={59} $c="#c8c8c8" />
                <Scroll $x={345} $y={-6} $w={6} $h={77} $c="#e1dfdd" $r={3} />
              </Screen>
            </Phone>
            <Scroll $x={1284} $y={96} $w={8} $h={385} $c="#c8c8c8" />
          </Canvas>
          <Sheets>
            <SheetArrows>
              <svg width="5" height="8"><path d="M5 0v8L0 4z" fill="#c8c6c4" /></svg>
              <svg width="5" height="8"><path d="M0 0v8l5-4z" fill="#c8c6c4" /></svg>
            </SheetArrows>
            <Sheet>Page 1</Sheet>
          </Sheets>
        </Center>
        <VisualsPane>
          <Chevron w={7} h={12} s={1.1} c="#323130" d="M6.500 .500L1 6L6.500 11.500" />
          <PaneTitle>Page visuals</PaneTitle>
          <RecorderBadge>
            <svg width="10" height="10"><circle cx="5" cy="5" r="4.500" fill="none" stroke="#e03c3c" strokeWidth=".8" /><circle cx="5" cy="5" r="3.200" fill="#f00" /></svg>
            <RecorderName>screenrec</RecorderName>
          </RecorderBadge>
        </VisualsPane>
      </Work>

      <StatusBar>
        <span>Page 1 of 1</span>
        <span>Update available (click to download)</span>
      </StatusBar>

      <Taskbar>
        <SystemButton $ml={16}>
          <svg width="16" height="16" fill="#fff"><path d="M0 2.200L6.500 1.300V7.600H0zM7.300 1.200L16 0v7.600H7.300zM0 8.400h6.500v6.300L0 13.800zM7.300 8.400H16V16l-8.700-1.200z" /></svg>
        </SystemButton>
        <SystemButton $ml={32}>
          <svg width="16" height="16" fill="none" stroke="#fff" strokeWidth="1.300"><circle cx="10.500" cy="5.500" r="5" /><path d="M7 9.200L.500 15.500" /></svg>
        </SystemButton>
        <SystemButton $ml={30}>
          <svg width="20" height="14" fill="none" stroke="#fff"><path d="M4.500.500h11v13h-11zM3 2.500H.500v9H3M17 2.500h2.500v9H17" /></svg>
        </SystemButton>
        <SystemButton $ml={20}><Grip /></SystemButton>
        <Apps>
          <TaskApp><EdgeLegacy /></TaskApp>
          <TaskApp $open><Code /></TaskApp>
          <TaskApp $open><Edge /></TaskApp>
          <TaskApp $open><Firefox /></TaskApp>
          <TaskApp $open><Explorer /></TaskApp>
          <TaskApp $open $active><PowerBi /></TaskApp>
          <TaskApp><Jupyter /></TaskApp>
          <TaskApp><Recorder /></TaskApp>
          <TaskApp><Atom /></TaskApp>
          <TaskApp><Database /></TaskApp>
          <TaskApp><VisualStudio /></TaskApp>
          <TaskApp><Telegram /></TaskApp>
          <TaskApp><Report /></TaskApp>
          <TaskApp><Vmware /></TaskApp>
        </Apps>
        <Tray>
          <TrayCell $w={8}><Grip /></TrayCell>
          <TrayCell $w={61} $ls={-0.2}>Desktop</TrayCell>
          <TrayCell $w={10} $up={20}><Chevron w={8} h={5} s={1.3} c="#fff" d="M0 0l2.500 2.500L0 5M4.500 0L7 2.500L4.500 5" /></TrayCell>
          <TrayCell $w={56}>
            <svg width="15" height="16" fill="none" stroke="#fff" strokeWidth="1.200"><circle cx="10.500" cy="3.500" r="2.800" /><path d="M7.500 8c2-2 6-1.500 6.500 3.500" /><circle cx="5" cy="7.500" r="2.500" /><path d="M.600 14.500c.5-5.500 8-5.500 8.500 0" /></svg>
          </TrayCell>
          <TrayCell $w={14}><Chevron w={12} h={7} s={1.3} c="#fff" d="M.500 6.500L6 1L11.500 6.500" /></TrayCell>
          <TrayCell $w={34}>
            <svg width="17" height="14" fill="none" stroke="#fff" strokeWidth="1.100"><path d="M.500 4.500h2.500L6.500 1v12L3 9.500H.500zM9 4.500q1.500 2.500 0 5M11.500 3q2.500 4 0 8M14 1.500q3.500 5.500 0 11" /></svg>
          </TrayCell>
          <TrayCell $w={22}>
            <svg width="16" height="16" fill="none" stroke="#fff" strokeWidth="1.100"><path d="M4 11L10 1.500q2.500-1.500 3 1L7.500 12 4 13.500zM9 3.500l3 2M4 8C-.500 9-.500 14 3 15M9.500 11c2-3 4-2.500 3.500 0 1 0 2-.5 2.500-1.500" /></svg>
          </TrayCell>
          <TrayCell $w={44} $ls={-0.5}>ENG</TrayCell>
          <Clock>
            <span>01:26 م</span>
            <ClockDate>٢٠٢٢/١١/٠٩</ClockDate>
          </Clock>
          <TrayCell $w={44}>
            <svg width="17" height="17"><path d="M0 0h16v12.500H7l-3 3v-3H0z" fill="#fff" /><path d="M3 3.500h10M3 6.500h10M3 9.500h6" stroke="#1a1213" /><path d="M15 7.500a4 4 0 1 1-4.500 5.500A4 4 0 0 0 15 7.500z" fill="#fff" stroke="#1a1213" /></svg>
          </TrayCell>
          <TrayCell $w={14}><svg width="1" height="40"><path d="M.500 0v40" stroke="#5c6264" /></svg></TrayCell>
        </Tray>
      </Taskbar>
    </Window>
  );
}
